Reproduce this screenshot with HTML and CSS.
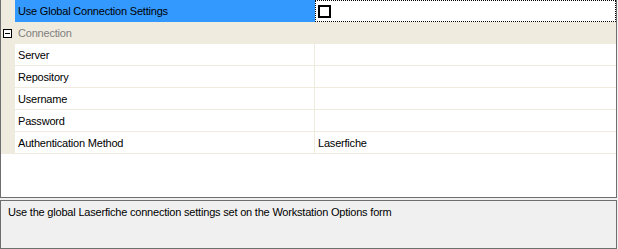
FILE: index.html
```html
<!DOCTYPE html>
<html lang="en">
<head>
  <meta charset="UTF-8">
  <title>Properties</title>
  <link rel="stylesheet" href="styles.css">
</head>
<body>
  <div class="grid">
    <div class="row selected">
      <div class="margin"></div>
      <div class="label">Use Global Connection Settings</div>
      <div class="value"><span class="check"></span></div>
    </div>
    <div class="row category">
      <div class="margin"><span class="toggle"></span></div>
      <div class="label">Connection</div>
    </div>
    <div class="row">
      <div class="margin"></div>
      <div class="label">Server</div>
      <div class="value"></div>
    </div>
    <div class="row">
      <div class="margin"></div>
      <div class="label">Repository</div>
      <div class="value"></div>
    </div>
    <div class="row">
      <div class="margin"></div>
      <div class="label">Username</div>
      <div class="value"></div>
    </div>
    <div class="row">
      <div class="margin"></div>
      <div class="label">Password</div>
      <div class="value"></div>
    </div>
    <div class="row">
      <div class="margin"></div>
      <div class="label">Authentication Method</div>
      <div class="value">Laserfiche</div>
    </div>
  </div>

  <div class="help">
    Use the global Laserfiche connection settings set on the Workstation Options form
  </div>
</body>
</html>
```

FILE: styles.css
```css
body {
  margin: 0;
  background-color: #f0f0f0;
  font-family: 'Liberation Sans', Arial, sans-serif;
  font-size: 11px;
  letter-spacing: -0.2px;
  color: #000;
}
.grid {
  width: 617px;
  height: 198px;
  box-sizing: border-box;
  background: white;
  border: 1px solid #6e6e6e;
  border-top: none;
}
.row {
  display: flex;
  height: 22px;
}
.margin {
  width: 14px;
  flex-shrink: 0;
  background-color: #efebde;
  position: relative;
}
.label {
  width: 300px;
  box-sizing: border-box;
  padding: 2px 0 0 3px;
  line-height: 19px;
  border-bottom: 1px solid #efebde;
  border-right: 1px solid #efebde;
  white-space: nowrap;
}
.value {
  flex: 1;
  box-sizing: border-box;
  padding: 2px 0 0 3px;
  line-height: 19px;
  border-bottom: 1px solid #efebde;
}
.selected .label {
  background-color: #3399ff;
  border-bottom-color: #3399ff;
  border-right-color: #3399ff;
}
.selected .value {
  border: 1px dotted #000;
  padding: 0 0 0 2px;
  display: flex;
  align-items: center;
}
.check {
  width: 13px;
  height: 13px;
  box-sizing: border-box;
  border: 2px solid #000;
  background: white;
  margin-top: 1px;
}
.category {
  background-color: #efebde;
}
.category .label {
  color: #808080;
  border: none;
}
.toggle {
  position: absolute;
  left: 2px;
  top: 7px;
  width: 9px;
  height: 9px;
  box-sizing: border-box;
  border: 1px solid #000;
  background: white;
}
.toggle::after {
  content: '';
  position: absolute;
  left: 1px;
  top: 3px;
  width: 5px;
  height: 1px;
  background: #000;
}
.help {
  width: 617px;
  height: 49px;
  box-sizing: border-box;
  margin-top: 2px;
  border: 1px solid #6e6e6e;
  background-color: #f0f0f0;
  padding: 5px 7px 4px;
  line-height: 13px;
}
```
